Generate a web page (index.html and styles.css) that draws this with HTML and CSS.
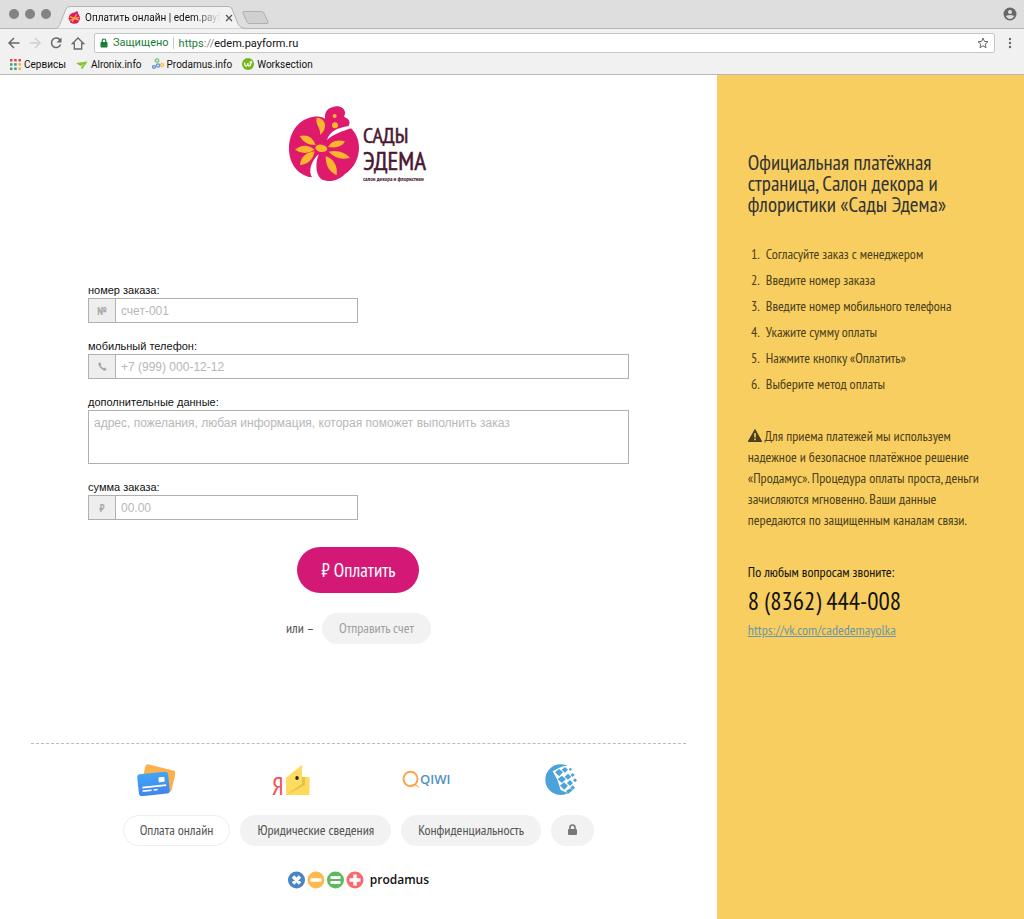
FILE: index.html
```html
<!DOCTYPE html>
<html lang="ru">
<head>
<meta charset="utf-8">
<title>Оплатить онлайн</title>
<link rel="stylesheet" href="styles.css">
</head>
<body>
<header class="browser">
  <div class="tabs">
    <div class="lights"><i></i><i></i><i></i></div>
    <div class="tab">
      <svg class="tab-shape" viewBox="0 0 190 23" preserveAspectRatio="none" aria-hidden="true"><path d="M0 22.5C4 22 4 20 5 18L11 3Q12 .5 15 .5H173Q176 .5 177 3L183 18Q185 22 190 22.5" fill="#f2f2f2" stroke="#b4b4b4"/></svg>
      <svg class="fav" viewBox="0 0 70 76" aria-hidden="true"><circle cx="34" cy="42" r="33" fill="#df1a6d"/><path d="M27 22C26 5 38 16 40 6C50-5 62 8 53 18C64 20 60 36 48 34" fill="#df1a6d"/><g stroke="#fbb62b" stroke-width="7" stroke-linecap="round"><path d="M10 34L58 52M10 54L58 38M22 62L46 22"/></g></svg>
      <span class="tab-title">Оплатить онлайн | edem.payf</span>
      <button class="plain" aria-label="Закрыть вкладку"><svg width="8" height="8" viewBox="0 0 8 8"><path d="M1 1l6 6M7 1l-6 6" stroke="#555" stroke-width="1.3"/></svg></button>
    </div>
    <button class="plain newtab" aria-label="Новая вкладка"><svg width="28" height="14" viewBox="0 0 28 14"><path d="M2 .5H19Q21 .5 22 2L26 11Q26.500 12.500 25 12.500H8Q6 12.500 5 11L1 2Q.5 .5 2 .5Z" fill="#d0d0d0" stroke="#b0b0b0"/></svg></button>
    <button class="plain profile" aria-label="Профиль"><svg width="14" height="14" viewBox="0 0 14 14"><circle cx="7" cy="7" r="6.500" fill="#66676b"/><circle cx="7" cy="5" r="2" fill="#dedede"/><path d="M3 9.500Q3 8 7 8t4 1.500Q9 12 7 12T3 9.500" fill="#dedede"/></svg></button>
  </div>
  <div class="toolbar">
    <button class="plain" aria-label="Назад"><svg width="12" height="12" viewBox="0 0 12 12" fill="none" stroke="#66676b" stroke-width="1.500"><path d="M11.500 6H1.500M6 1L1 6l5 5"/></svg></button>
    <button class="plain" aria-label="Вперёд"><svg width="12" height="12" viewBox="0 0 12 12" fill="none" stroke="#d0d0d0" stroke-width="1.500"><path d="M.5 6h10M6 1l5 5-5 5"/></svg></button>
    <button class="plain" aria-label="Обновить"><svg width="12" height="12" viewBox="0 0 12 12"><path d="M10 3A4.700 4.700 0 1 0 10.600 7.500" fill="none" stroke="#66676b" stroke-width="1.500"/><path d="M11.500 .5V5.500H6.500Z" fill="#66676b"/></svg></button>
    <button class="plain" aria-label="Домой"><svg width="14" height="13" viewBox="0 0 14 13"><path d="M1.500 6.500L7 1l5.500 5.500H10.700V12H3.300V6.500Z" fill="none" stroke="#66676b" stroke-width="1.300"/></svg></button>
    <div class="address">
      <svg width="8" height="10" viewBox="0 0 8 10"><rect x=".5" y="4" width="7" height="5.500" rx=".7" fill="#1b7e38"/><path d="M2.200 4.500V2.800a1.800 1.800 0 0 1 3.600 0V4.500" fill="none" stroke="#1b7e38" stroke-width="1.200"/></svg>
      <span class="secure">Защищено</span>
      <span class="url"><span class="scheme">https</span><span class="slashes">://</span>edem.payform.ru</span>
      <button class="plain star" aria-label="Добавить в закладки"><svg width="12" height="12" viewBox="0 0 12 12"><path d="M6 1l1.400 3.400 3.600.3-2.800 2.400.9 3.600L6 8.800l-3.100 1.900.9-3.600L1 4.700l3.600-.3Z" fill="none" stroke="#66676b"/></svg></button>
    </div>
    <button class="plain" aria-label="Меню"><svg width="4" height="12" viewBox="0 0 4 12" fill="#66676b"><circle cx="2" cy="2" r="1.200"/><circle cx="2" cy="6" r="1.200"/><circle cx="2" cy="10" r="1.200"/></svg></button>
  </div>
  <nav class="bookmarks">
    <a href="#"><svg width="11" height="11" viewBox="0 0 11 11"><path d="M0 0h2.500v2.500H0zM4.200 0h2.500v2.500H4.200zM8.500 0H11v2.500H8.500z" fill="#e5453b"/><path d="M0 4.200h2.500v2.500H0z" fill="#42a054"/><path d="M4.200 4.200h2.500v2.500H4.200z" fill="#427fe0"/><path d="M8.500 4.200H11v2.500H8.500z" fill="#f2b233"/><path d="M0 8.500h2.500V11H0zM4.200 8.500h2.500V11H4.200z" fill="#42a054"/><path d="M8.500 8.500H11V11H8.500z" fill="#f2b233"/></svg>Сервисы</a>
    <a href="#"><svg width="12" height="11" viewBox="0 0 12 11"><path d="M0 4L11.500 2.500 6 10.500 5 8 8.500 5 4.500 7Z" fill="#86c62c"/></svg>Alronix.info</a>
    <a href="#"><svg width="12" height="12" viewBox="0 0 12 12" fill="none" stroke-width="1.300"><circle cx="5" cy="2.500" r="1.700" stroke="#7cc36a"/><circle cx="2" cy="9" r="1.400" stroke="#5b8fd6"/><circle cx="6" cy="7.500" r="1.600" stroke="#5b8fd6"/><circle cx="10" cy="7" r="1.500" stroke="#f9bd49"/></svg>Prodamus.info</a>
    <a href="#"><svg width="12" height="12" viewBox="0 0 12 12"><circle cx="6" cy="6" r="6" fill="#74b71b"/><path d="M2.500 4.500Q3 8.500 4.500 8T6 5Q6 8.500 7.500 8T9 3.500M7.500 4.500L9 3.500l1 1.300" fill="none" stroke="#fff" stroke-width="1.200"/></svg>Worksection</a>
  </nav>
</header>

<div class="page">
  <main class="main">
    <svg class="logo" width="140" height="78" viewBox="0 0 140 78" role="img" aria-label="Сады Эдема, салон декора и флористики">
      <g transform="scale(.3333) translate(-25 -27)">
        <path d="M102 62C60 68 28 105 28 158C28 205 58 240 97 244C85 225 95 195 117 175C106 205 108 235 125 250C150 262 180 252 195 235C225 215 238 185 238 155C238 130 228 110 214 97C190 105 160 115 142 132C150 105 175 95 207 90C214 75 207 68 193 62C205 40 180 25 160 33C140 38 135 50 136 68C125 62 115 61 102 62Z" fill="#df1a6d"/>
        <g fill="#fbb62b">
          <ellipse cx="125" cy="157" rx="18" ry="11" transform="rotate(10 125 157)"/>
          <path d="M60 120Q95 112 108 147Q75 148 60 120M46 161Q75 137 105 161Q75 181 46 161M61 207Q64 172 105 166Q98 204 61 207M145 153Q160 127 196 136Q185 159 145 153M147 167Q185 158 211 185Q175 196 147 167M138 180Q176 195 171 238Q137 222 138 180M111 65C140 66 145 98 121 117C124 95 106 86 111 65"/>
          <circle cx="166" cy="88" r="9"/><circle cx="165" cy="60" r="6"/>
        </g>
      </g>
      <text class="logo-a" x="75" y="38">САДЫ</text>
      <text class="logo-b" x="75" y="65">ЭДЕМА</text>
      <text class="logo-c" x="75" y="76">салон декора и флористики</text>
    </svg>

    <form class="form">
      <div class="field half">
        <label for="order">номер заказа:</label>
        <div class="group"><span class="addon">№</span><input id="order" type="text" placeholder="счет-001"></div>
      </div>
      <div class="field">
        <label for="phone">мобильный телефон:</label>
        <div class="group"><span class="addon"><svg width="9" height="9" viewBox="0 0 9 9"><path d="M.3 1.300L2 .2 3.500 2.600 2.700 3.500Q3.500 5.300 5.500 6.300L6.400 5.500 8.800 7 7.700 8.600Q6 9.500 3 6.600T.3 1.300" fill="#a8a8a8"/></svg></span><input id="phone" type="tel" placeholder="+7 (999) 000-12-12"></div>
      </div>
      <div class="field">
        <label for="extra">дополнительные данные:</label>
        <textarea id="extra" placeholder="адрес, пожелания, любая информация, которая поможет выполнить заказ"></textarea>
      </div>
      <div class="field half">
        <label for="sum">сумма заказа:</label>
        <div class="group"><span class="addon">₽</span><input id="sum" type="text" placeholder="00.00"></div>
      </div>
      <button class="pay" type="button">₽ Оплатить</button>
      <div class="or"><span>или –</span><button class="pill muted" type="button">Отправить счет</button></div>
    </form>

    <footer class="footer">
      <div class="methods">
        <svg width="38" height="32" viewBox="0 0 38 32" role="img" aria-label="Банковские карты"><defs><linearGradient id="bl" x2="0" y2="1"><stop stop-color="#42a5f5"/><stop offset="1" stop-color="#4285ee"/></linearGradient></defs><rect x="6" y="3" width="31" height="22" rx="3" fill="#fdb04c" transform="rotate(14 21 14)"/><g transform="rotate(-6 16 20)"><rect x="1" y="9" width="31" height="22" rx="3" fill="url(#bl)"/><rect x="22" y="14" width="6" height="5" rx="1" fill="#fff"/><path d="M5 22.500H29M5 26H14M16 26h4" stroke="#fff" stroke-width="1.600"/></g></svg>
        <svg class="wallet" width="38" height="32" viewBox="0 0 38 32" role="img" aria-label="Яндекс.Деньги"><text class="ya" x="0" y="31">Я</text><path d="M14 14L30 1V13H37.500V31H14Z" fill="#ffd95a"/><path d="M14 31L33 21V13H30V18Z" fill="#e5c04b"/><path d="M14 14L30 1V20L14 31Z" fill="#ffdc5f"/><ellipse cx="25" cy="14" rx="1.700" ry="2.100" fill="#222"/></svg>
        <svg class="qiwi-logo" width="48" height="20" viewBox="0 0 48 20" role="img" aria-label="QIWI"><ellipse cx="8.500" cy="9" rx="7" ry="7.300" fill="none" stroke="#fba548" stroke-width="2"/><path d="M7 15q6-1 11 4-3-5-6-5" fill="#fba548"/><text class="qiwi" x="18" y="14">QIWI</text></svg>
        <svg width="32" height="32" viewBox="0 0 32 32" role="img" aria-label="WebMoney">
          <g transform="scale(.3333) translate(-557 -87)">
            <circle cx="604" cy="134" r="46" fill="#4ba3da"/>
            <path d="M580 109L600 98 612 94 660 88V180L619 172 604 165 594 134Z" fill="#fff"/>
            <path d="M620 168L632 160 640 166 626 177Z" fill="#4ba3da"/>
            <path d="M587 112l12-10 12 9-11 13zM607 104l10-8 9 8-9 9zM628 103l5-5 5 5-5 5zM595 133l12-11 13 10-12 12zM616 125l10-9 10 9-10 9zM634 120l6-6 6 6-6 6zM602 152l12-10 12 10-11 12zM623 144l9-9 9 9-9 9zM641 136l6-6 6 6-6 6zM633 158l7-7 7 7-7 7z" fill="#4ba3da"/>
          </g>
        </svg>
      </div>
      <nav class="links">
        <a class="pill outline" href="#">Оплата онлайн</a>
        <a class="pill" href="#">Юридические сведения</a>
        <a class="pill" href="#">Конфиденциальность</a>
        <a class="pill" href="#" aria-label="Безопасность"><svg width="9" height="12" viewBox="0 0 9 12"><rect y="5" width="9" height="6" rx="1" fill="#777"/><path d="M2 5.500V3.500a2.500 2.500 0 0 1 5 0V5.500" fill="none" stroke="#777" stroke-width="1.600"/></svg></a>
      </nav>
      <div class="brand">
        <svg width="76" height="18" viewBox="0 0 76 18" aria-hidden="true"><circle cx="8.500" cy="9" r="8.500" fill="#4a83c6"/><circle cx="28" cy="9" r="8.500" fill="#fdb94d"/><circle cx="47.500" cy="9" r="8.500" fill="#5cba5e"/><circle cx="67" cy="9" r="8.500" fill="#f66a70"/><g stroke="#fff" stroke-width="3.500"><path d="M5 5.500l7 7M12 5.500l-7 7M22.500 9h11M67 3.500v11M61.500 9h11"/></g><path d="M42.500 6.500h10M42.500 11.500h10" stroke="#fff" stroke-width="3"/></svg>
        <span>prodamus</span>
      </div>
    </footer>
  </main>

  <aside class="side">
    <h1>Официальная платёжная<br>страница, Салон декора и<br>флористики «Сады Эдема»</h1>
    <ol>
      <li>Согласуйте заказ с менеджером</li>
      <li>Введите номер заказа</li>
      <li>Введите номер мобильного телефона</li>
      <li>Укажите сумму оплаты</li>
      <li>Нажмите кнопку «Оплатить»</li>
      <li>Выберите метод оплаты</li>
    </ol>
    <p class="note"><svg width="14" height="13" viewBox="0 0 14 13" aria-hidden="true"><path d="M7 .5L13.700 12.500H.3Z" fill="#4b401d" stroke="#4b401d" stroke-linejoin="round"/><path d="M7 4v4.500M7 9.500v1.700" stroke="#f7ce5f" stroke-width="1.600"/></svg> Для приема платежей мы используем<br>надежное и безопасное платёжное решение<br>«Продамус». Процедура оплаты проста, деньги<br>зачисляются мгновенно. Ваши данные<br>передаются по защищенным каналам связи.</p>
    <p class="ask">По любым вопросам звоните:</p>
    <p class="tel">8 (8362) 444-008</p>
    <a class="vk" href="#">https://vk.com/cadedemayolka</a>
  </aside>
</div>
</body>
</html>
```
FILE: styles.css
```css
:root {
  --narrow: "PT Sans Narrow", "Open Sans Condensed", "Roboto Condensed", "Noto Sans Condensed", "Liberation Sans Narrow", "Open Sans", sans-serif;
}
* { box-sizing: border-box; }
body {
  margin: 0;
  min-height: 100vh;
  display: flex;
  flex-direction: column;
  font-family: var(--narrow);
  font-size: 14px;
  color: #555;
  background: #fff;
}
a { color: inherit; text-decoration: none; }
svg { flex: none; }
.plain { border: 0; padding: 0; background: none; display: flex; align-items: center; }

.browser {
  background: #f1f1f1;
  border-bottom: 1px solid #b9b9b9;
  font-family: Roboto, sans-serif;
  font-size: 10px;
  color: #111;
}
.tabs {
  height: 29px;
  display: flex;
  align-items: flex-end;
  padding: 0 7px 0 9px;
  background: #dedede;
  border-bottom: 1px solid #b4b4b4;
}
.lights { display: flex; gap: 6px; align-self: center; }
.lights i { width: 10px; height: 10px; border-radius: 50%; background: #838387; }
.tab {
  position: relative;
  width: 190px;
  height: 23px;
  margin: 0 0 -1px 4px;
  padding: 0 14px 0 13px;
  display: flex;
  align-items: center;
  gap: 4px;
}
.tab-shape { position: absolute; left: 0; top: 0; width: 100%; height: 100%; }
.fav { width: 13px; height: 13px; position: relative; }
.tab-title {
  position: relative;
  flex: 1;
  white-space: nowrap;
  -webkit-mask-image: linear-gradient(90deg, #000 80%, transparent);
  mask-image: linear-gradient(90deg, #000 80%, transparent);
}
.tab .plain { position: relative; }
.newtab { align-self: center; margin: 8px 0 0 -3px; }
.profile { align-self: center; margin-left: auto; }
.toolbar {
  height: 28px;
  display: flex;
  align-items: center;
  gap: 9px;
  padding: 0 12px 0 8px;
}
.address {
  flex: 1;
  height: 20px;
  margin-right: 4px;
  display: flex;
  align-items: center;
  gap: 5px;
  padding: 0 5px;
  background: #fff;
  border: 1px solid #c6c6c6;
  border-radius: 2px;
  font-size: 11px;
}
.secure { color: #1b7e38; padding-right: 4px; border-right: 1px solid #ccc; line-height: 12px; }
.scheme { color: #1b7e38; }
.slashes { color: #888; }
.star { margin-left: auto; }
.bookmarks { height: 17px; display: flex; align-items: center; gap: 10px; padding: 0 10px 3px; }
.bookmarks a { display: flex; align-items: center; gap: 3px; }

.page { flex: 1; display: flex; }
.main {
  width: 70%;
  display: flex;
  flex-direction: column;
  align-items: center;
  padding: 30px 31px;
}
.logo { display: block; }
.logo-a { font: 22px var(--narrow); fill: #4a1732; stroke: #4a1732; stroke-width: .5px; }
.logo-b { font: 25px var(--narrow); fill: #4a1732; stroke: #4a1732; stroke-width: .5px; }
.logo-c { font: bold 6px var(--narrow); fill: #4a1732; }
.form {
  align-self: stretch;
  margin: 100px 57px 0;
  display: flex;
  flex-direction: column;
  gap: 16px;
}
.field { display: flex; flex-direction: column; font-family: "Liberation Sans", sans-serif; }
.half { width: 50%; }
.field label { font-size: 11px; line-height: 14px; padding-bottom: 1px; color: #111; }
.group { display: flex; height: 25px; border: 1px solid #b0b0b0; }
.addon {
  width: 27px;
  display: flex;
  align-items: center;
  justify-content: center;
  background: #eee;
  border-right: 1px solid #b0b0b0;
  font-family: var(--narrow);
  font-size: 11px;
  font-weight: 700;
  color: #a8a8a8;
}
.group input { flex: 1; min-width: 0; border: 0; padding: 0 5px; font: 12px "Liberation Sans", sans-serif; background: #fff; }
textarea {
  height: 54px;
  resize: none;
  border: 1px solid #b0b0b0;
  padding: 5px;
  font: 12px "Liberation Sans", sans-serif;
}
::placeholder { color: #b7b7b7; opacity: 1; }
.pay {
  align-self: center;
  height: 46px;
  margin-top: 11px;
  padding: 0 24px;
  border: 0;
  border-radius: 23px;
  background: #d41875;
  color: #fff;
  font: 19px var(--narrow);
}
.or { display: flex; justify-content: center; align-items: center; gap: 8px; margin-top: 4px; }
.or span { padding-bottom: 2px; }
.pill {
  height: 31px;
  display: flex;
  align-items: center;
  padding: 0 17px 2px;
  border: 0;
  border-radius: 16px;
  background: #f2f2f2;
  color: #555;
  font: 14px var(--narrow);
}
.muted { color: #a0a0a0; }
.outline { background: #fff; border: 1px solid #eee; padding: 0 16px 2px; }
.footer {
  align-self: stretch;
  margin-top: auto;
  border-top: 1px dashed #bbb;
  padding-top: 20px;
}
.methods { display: grid; grid-template-columns: repeat(4, 1fr); place-items: center; height: 32px; padding: 0 57px; }
.links { display: flex; justify-content: center; gap: 10px; margin-top: 19px; }
.brand { display: flex; justify-content: center; align-items: center; gap: 6px; margin-top: 25px; color: #111; font: 600 12px/18px "Open Sans", sans-serif; }
.wallet, .qiwi-logo { overflow: visible; }
.ya { font: 25px var(--narrow); fill: #f25159; }
.qiwi { font: 600 13px "Open Sans", sans-serif; fill: #4d93c5; }

.side { width: 30%; padding: 77px 31px; background: #f7ce5f; color: #4b401d; white-space: nowrap; }
h1 { margin: 0; font-size: 21px; line-height: 21px; font-weight: 400; color: #333; }
ol { margin: 26px 0 0; padding-left: 14px; line-height: 26px; }
li { padding-left: 4px; }
.side p { margin: 0; }
.side .note { margin-top: 29px; line-height: 21px; }
.note svg { vertical-align: -1px; }
.side .ask { margin-top: 31px; line-height: 21px; color: #111; }
.side .tel { font-size: 25px; line-height: 36px; color: #111; }
.vk { color: #6d97a8; text-decoration: underline; line-height: 22px; }
```
